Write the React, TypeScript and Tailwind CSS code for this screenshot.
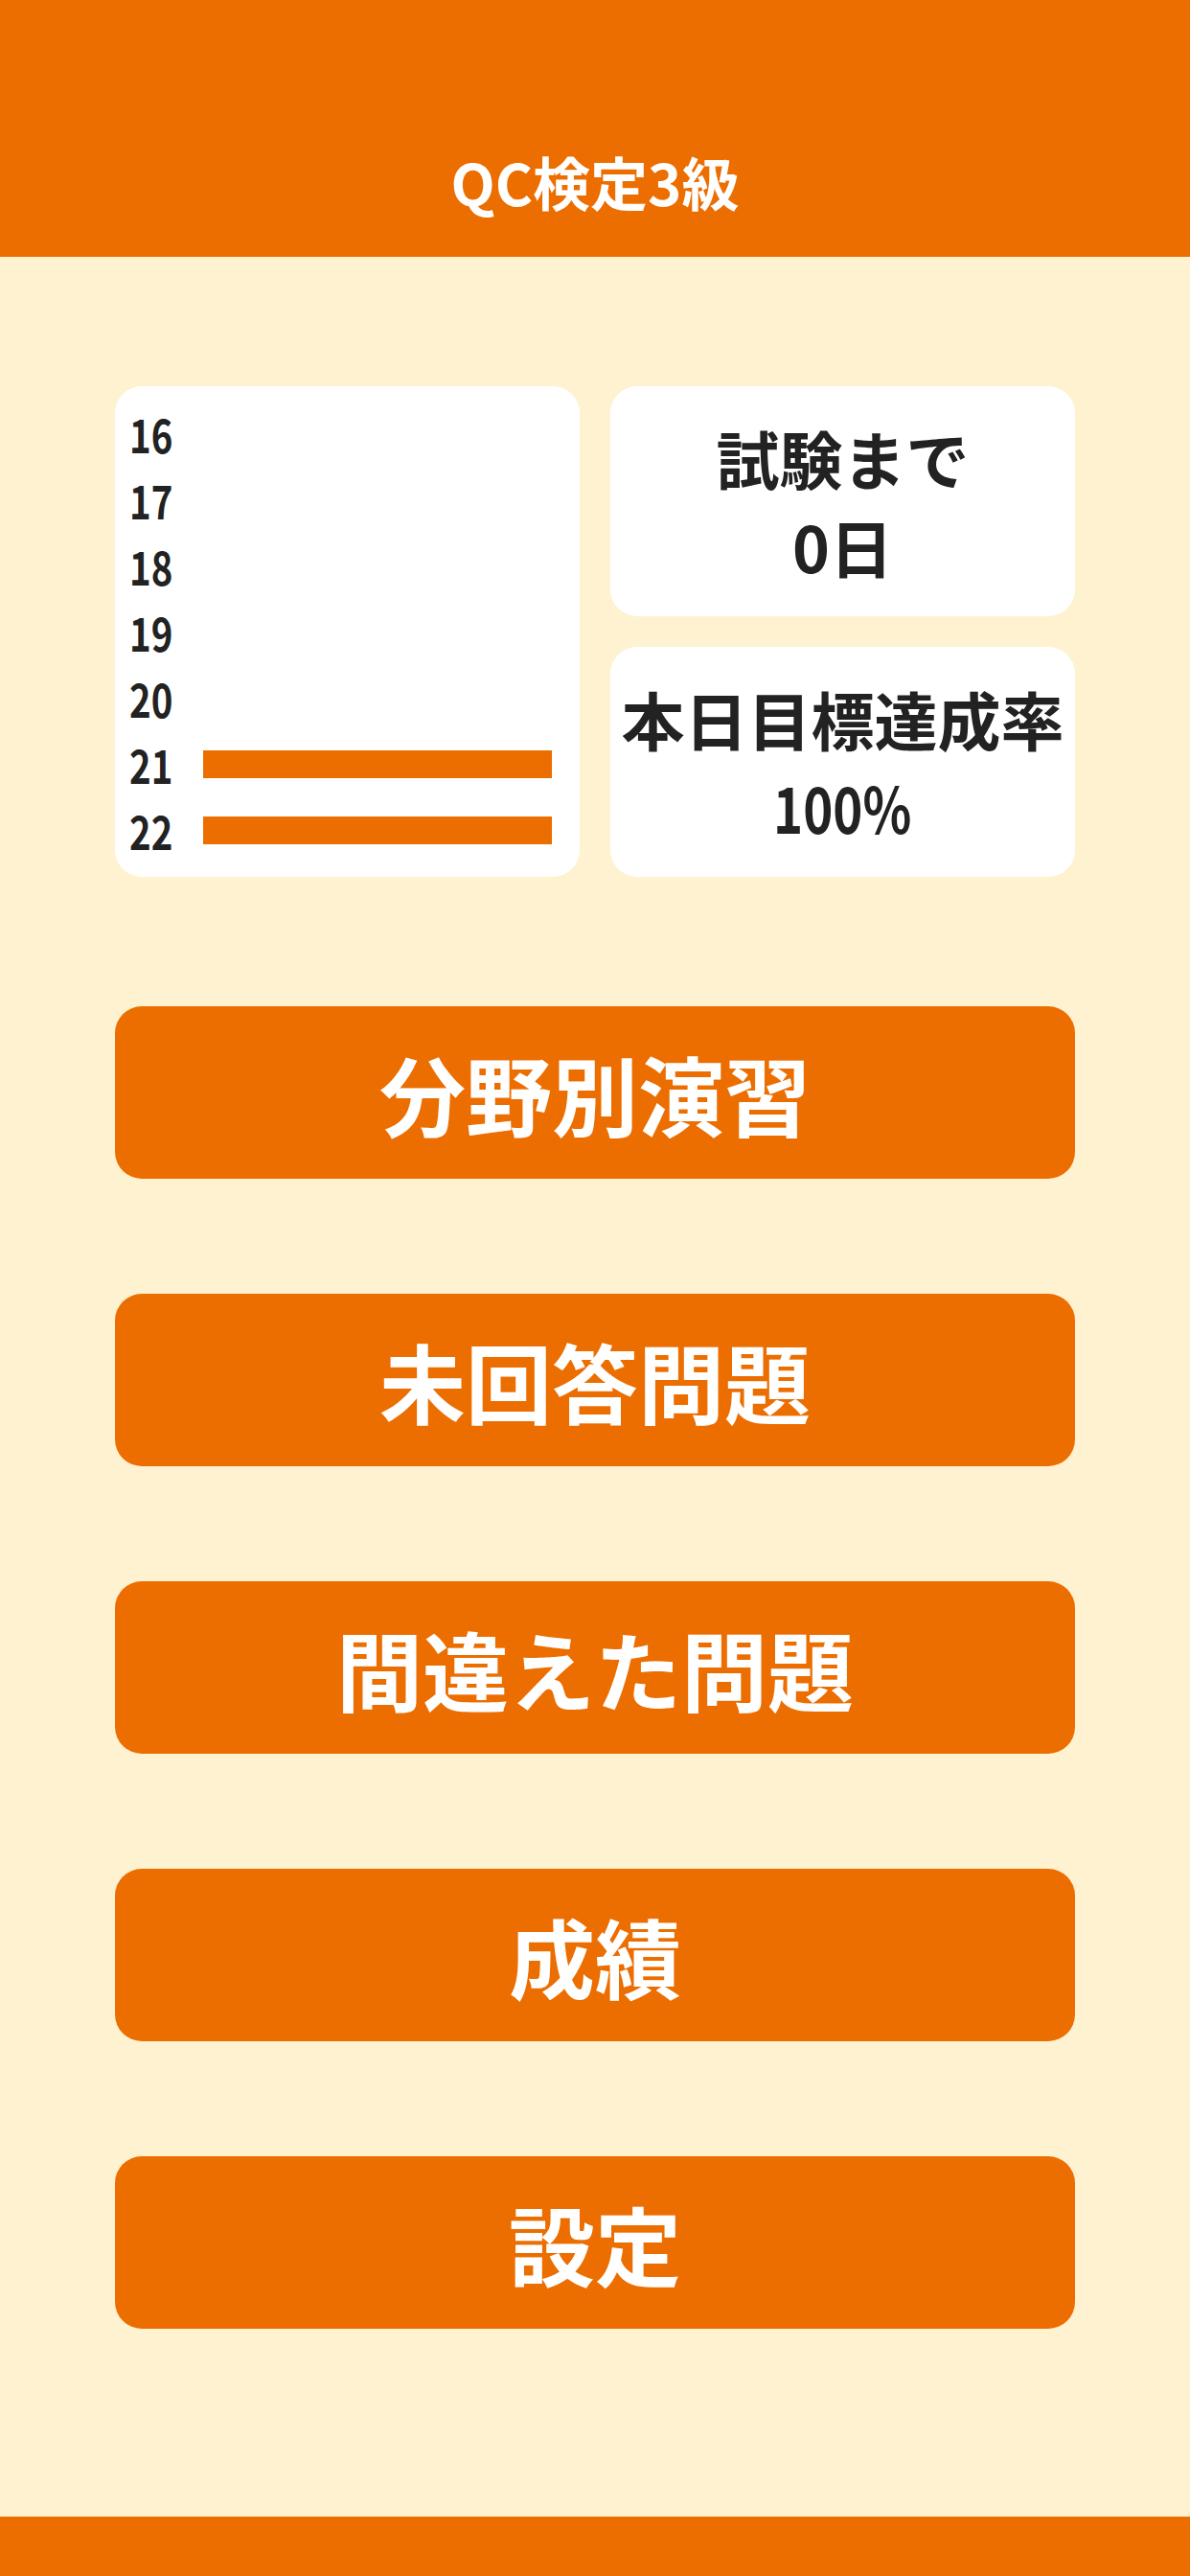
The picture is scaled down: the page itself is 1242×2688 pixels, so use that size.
const hours = [
  { label: '16', done: false },
  { label: '17', done: false },
  { label: '18', done: false },
  { label: '19', done: false },
  { label: '20', done: false },
  { label: '21', done: true },
  { label: '22', done: true },
];

const menu = ['分野別演習', '未回答問題', '間違えた問題', '成績', '設定'];

export default function App() {
  return (
    <div className="flex h-[2688px] w-full flex-col bg-[#fff2d1] font-['Noto_Sans_CJK_JP','Noto_Sans',sans-serif] font-bold">
      {/* Header */}
      <header className="flex h-[268px] items-end justify-center bg-[#ec6d00] pb-[36px]">
        <h1 className="text-[60px] leading-[86px] text-white">QC検定3級</h1>
      </header>

      <main className="flex flex-1 flex-col px-[120px] pt-[135px]">
        {/* Stats */}
        <div className="grid h-[512px] grid-cols-2 gap-[32px]">
          <div className="flex flex-col justify-center rounded-[28px] bg-white pl-[15px] pr-[29px]">
            {hours.map((h) => (
              <div key={h.label} className="flex h-[69px] items-center">
                <span className="w-[77px] text-[48px] leading-none text-[#222]">
                  <span className="inline-block origin-left scale-x-[0.8]">{h.label}</span>
                </span>
                {h.done && <div className="h-[29px] flex-1 bg-[#ec6d00]" />}
              </div>
            ))}
          </div>

          <div className="flex flex-col gap-[32px]">
            <div className="flex flex-1 flex-col items-center justify-center rounded-[28px] bg-white text-center text-[66px] leading-[92px] text-[#222]">
              <span>試験まで</span>
              <span>0日</span>
            </div>
            <div className="flex flex-1 flex-col items-center justify-center rounded-[28px] bg-white text-center text-[66px] leading-[92px] text-[#222]">
              <span>本日目標達成率</span>
              <span className="inline-block scale-x-[0.8]">100%</span>
            </div>
          </div>
        </div>

        {/* Menu */}
        <nav className="mt-[135px] flex flex-col gap-[120px]">
          {menu.map((item) => (
            <button
              key={item}
              type="button"
              className="flex h-[180px] w-full items-center justify-center rounded-[28px] bg-[#ec6d00] text-[90px] leading-none text-white"
            >
              {item}
            </button>
          ))}
        </nav>
      </main>

      <footer className="h-[62px] bg-[#ec6d00]" />
    </div>
  );
}
